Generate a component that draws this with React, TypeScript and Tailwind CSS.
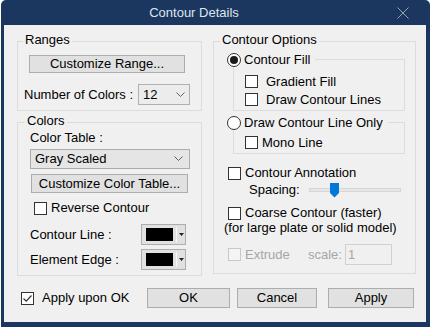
import React from "react";

const font = "font-['Liberation_Sans',Arial,sans-serif] text-[13px] leading-[14px]";

function Check({ checked = false, disabled = false }: { checked?: boolean; disabled?: boolean }) {
  return (
    <span
      className={`w-[13px] h-[13px] shrink-0 border flex items-center justify-center ${
        disabled ? "border-[#c8c8c8] bg-[#f4f4f4]" : "border-[#333333] bg-white"
      }`}
    >
      {checked && (
        <svg width="11" height="11" viewBox="0 0 11 11">
          <path d="M1.5 5.5 L4.2 8.2 L9.5 2.5" fill="none" stroke="#333" strokeWidth="1.2" />
        </svg>
      )}
    </span>
  );
}

function Radio({ checked = false }: { checked?: boolean }) {
  return (
    <span className="w-[14px] h-[14px] shrink-0 rounded-full border border-[#333333] bg-white flex items-center justify-center">
      {checked && <span className="w-[8px] h-[8px] rounded-full bg-[#1a1a1a]" />}
    </span>
  );
}

function Chevron() {
  return (
    <svg width="9" height="6" viewBox="0 0 9 6">
      <path d="M0.5 0.5 L4.5 4.5 L8.5 0.5" fill="none" stroke="#606060" strokeWidth="1" />
    </svg>
  );
}

function Btn({ children, className = "" }: { children: React.ReactNode; className?: string }) {
  return (
    <div className={`border border-[#adadad] bg-[#e1e1e1] flex items-center justify-center ${className}`}>
      {children}
    </div>
  );
}

function ColorBtn() {
  return (
    <div className="ml-auto w-[45px] h-[21px] border border-[#adadad] bg-[#e1e1e1] flex items-center pl-[4px]">
      <span className="w-[27px] h-[13px] bg-black" />
      <span className="w-px h-[15px] bg-[#fafafa] ml-[3px]" />
      <svg width="5" height="3" viewBox="0 0 5 3" className="ml-[2px]">
        <path d="M0 0 H5 L2.5 3 Z" fill="#222" />
      </svg>
    </div>
  );
}

function Group({ label, left, className, children }: { label: string; left: string; className: string; children: React.ReactNode }) {
  return (
    <div className={`relative border border-[#dcdcdc] flex flex-col ${className}`}>
      <span className={`absolute top-[-9px] ${left} px-[2px] bg-[#f0f0f0]`}>{label}</span>
      {children}
    </div>
  );
}

export default function App() {
  return (
    <div className={`w-[431px] h-[330px] bg-white ${font} text-black`}>
      <div className="ml-px w-[429px] h-[327px] bg-[#1b375f] rounded-t-[5px] flex flex-col pl-[3px] pr-[4px] pb-[5px]">
        <div className="h-[25px] flex items-center shrink-0">
          <div className="flex-1 text-center text-[#dde5ee] pl-[3px]">Contour Details</div>
          <div className="w-[45px] flex justify-center pr-[2px]">
            <svg width="12" height="12" viewBox="0 0 12 12">
              <path d="M0.5 0.5 L11.5 11.5 M11.5 0.5 L0.5 11.5" stroke="#97a3b5" strokeWidth="1" />
            </svg>
          </div>
        </div>

        <div className="flex-1 bg-[#f0f0f0] pt-[16px] pl-[13px]">
          <div className="flex gap-[11px]">
            <div className="w-[185px] flex flex-col">
              <Group label="Ranges" left="left-[5px]" className="h-[70px]">
                <Btn className="mt-[13px] ml-[11px] w-[156px] h-[18px]">Customize Range...</Btn>
                <div className="mt-[11px] h-[21px] flex items-center pl-[6px]">
                  <span className="w-[114px]">Number of Colors :</span>
                  <div className="w-[52px] h-[21px] border border-[#b0b0b0] bg-[#ececec] flex items-center pl-[4px] pr-[4px]">
                    <span className="flex-1">12</span>
                    <Chevron />
                  </div>
                </div>
              </Group>

              <Group label="Colors" left="left-[7px]" className="mt-[11px] h-[154px]">
                <div className="mt-[8px] h-[14px] pl-[12px]">Color Table :</div>
                <div className="mt-[4px] ml-[12px] w-[160px] h-[20px] border border-[#acacac] bg-[#e5e5e5] flex items-center pl-[4px] pr-[6px]">
                  <span className="flex-1">Gray Scaled</span>
                  <Chevron />
                </div>
                <Btn className="mt-[5px] ml-[13px] w-[157px] h-[19px]">Customize Color Table...</Btn>
                <div className="mt-[8px] h-[14px] pl-[16px] flex items-center gap-[4px]">
                  <Check />
                  <span>Reverse Contour</span>
                </div>
                <div className="mt-[9px] h-[21px] flex items-center pl-[12px] pr-[15px]">
                  <span>Contour Line :</span>
                  <ColorBtn />
                </div>
                <div className="mt-[4px] h-[21px] flex items-center pl-[12px] pr-[15px]">
                  <span>Element Edge :</span>
                  <ColorBtn />
                </div>
              </Group>
            </div>

            <Group label="Contour Options" left="left-[6px]" className="w-[203px] h-[233px]">
              <div className="relative mt-[17px] ml-[19px] w-[172px] h-[52px] border border-[#dcdcdc] flex flex-col pl-[11px] pt-[15px] gap-[5px]">
                <div className="absolute top-[-7px] left-[-7px] flex items-center gap-[3px] bg-[#f0f0f0] pr-[5px]">
                  <Radio checked />
                  <span>Contour Fill</span>
                </div>
                <div className="h-[13px] flex items-center gap-[8px]">
                  <Check />
                  <span>Gradient Fill</span>
                </div>
                <div className="h-[13px] flex items-center gap-[8px]">
                  <Check />
                  <span>Draw Contour Lines</span>
                </div>
              </div>

              <div className="relative mt-[11px] ml-[19px] w-[172px] h-[32px] border border-[#dcdcdc] flex flex-col pl-[11px] pt-[13px]">
                <div className="absolute top-[-7px] left-[-7px] flex items-center gap-[3px] bg-[#f0f0f0] pr-[5px]">
                  <Radio />
                  <span>Draw Contour Line Only</span>
                </div>
                <div className="h-[13px] flex items-center gap-[4px]">
                  <Check />
                  <span>Mono Line</span>
                </div>
              </div>

              <div className="mt-[12px] h-[14px] pl-[14px] flex items-center gap-[4px]">
                <Check />
                <span>Contour Annotation</span>
              </div>
              <div className="mt-[3px] h-[14px] pl-[35px] flex items-center">
                <span className="w-[60px]">Spacing:</span>
                <div className="relative w-[92px] h-[4px] border border-[#d6d6d6] bg-[#e7e7e7]">
                  <svg width="9" height="15" viewBox="0 0 9 15" className="absolute left-[20px] top-[-6px]">
                    <path d="M0 0 H9 V10 L4.5 14.5 L0 10 Z" fill="#0078d7" />
                  </svg>
                </div>
              </div>
              <div className="mt-[9px] h-[14px] pl-[14px] flex items-center gap-[4px]">
                <Check />
                <span>Coarse Contour (faster)</span>
              </div>
              <div className="mt-[1px] h-[14px] pl-[10px]">(for large plate or solid model)</div>
              <div className="mt-[9px] h-[21px] pl-[14px] flex items-center text-[#a6a6a6]">
                <Check disabled />
                <span className="ml-[4px] w-[63px]">Extrude</span>
                <span className="w-[37px]">scale:</span>
                <div className="w-[47px] h-[21px] border border-[#d0d0d0] flex items-center pl-[2px]">1</div>
              </div>
            </Group>
          </div>

          <div className="mt-[12px] h-[20px] flex items-center">
            <div className="w-[130px] pl-[4px] flex items-center gap-[8px]">
              <Check checked />
              <span>Apply upon OK</span>
            </div>
            <Btn className="w-[83px] h-[20px]">OK</Btn>
            <Btn className="ml-[7px] w-[80px] h-[20px]">Cancel</Btn>
            <Btn className="ml-[11px] w-[86px] h-[20px]">Apply</Btn>
          </div>
        </div>
      </div>
    </div>
  );
}
